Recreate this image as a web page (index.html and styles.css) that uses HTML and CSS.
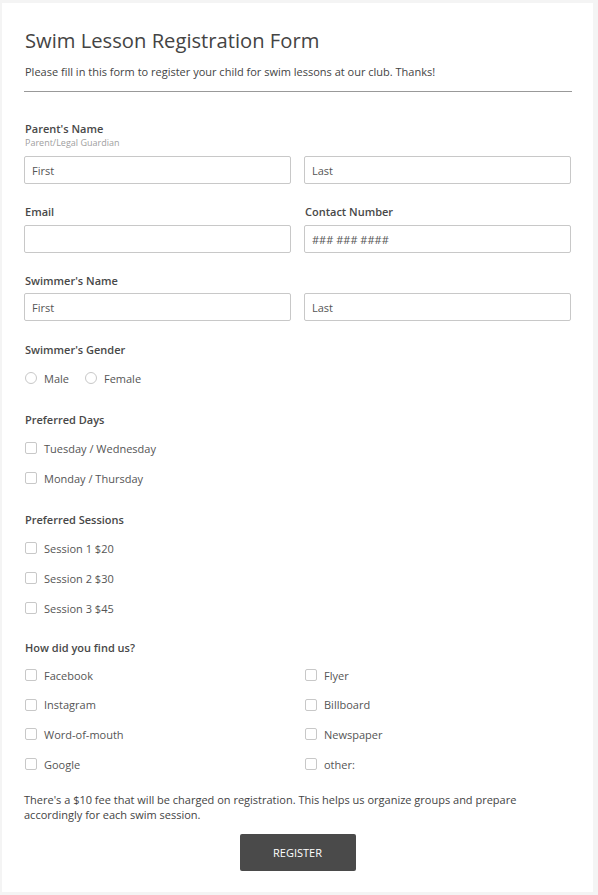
FILE: index.html
```html
<!DOCTYPE html>
<html lang="en">
<head>
<meta charset="utf-8">
<title>Swim Lesson Registration Form</title>
<link rel="stylesheet" href="styles.css">
</head>
<body>
<form class="card">
  <header class="head">
    <h1 class="title">Swim Lesson Registration Form</h1>
    <p class="intro">Please fill in this form to register your child for swim lessons at our club. Thanks!</p>
  </header>

  <div class="field">
    <div class="label">Parent's Name</div>
    <div class="sublabel">Parent/Legal Guardian</div>
    <div class="pair">
      <input class="text" type="text" placeholder="First">
      <input class="text" type="text" placeholder="Last">
    </div>
  </div>

  <div class="pair field">
    <div>
      <div class="label">Email</div>
      <input class="text" type="text">
    </div>
    <div>
      <div class="label">Contact Number</div>
      <input class="text" type="text" placeholder="### ### ####">
    </div>
  </div>

  <div class="field tight">
    <div class="label">Swimmer's Name</div>
    <div class="pair">
      <input class="text" type="text" placeholder="First">
      <input class="text" type="text" placeholder="Last">
    </div>
  </div>

  <div class="field group">
    <div class="label">Swimmer's Gender</div>
    <div class="inline">
      <label class="opt"><input class="radio" type="radio" name="g">Male</label>
      <label class="opt"><input class="radio" type="radio" name="g">Female</label>
    </div>
  </div>

  <div class="field group">
    <div class="label">Preferred Days</div>
    <div class="list">
      <label class="opt"><input class="check" type="checkbox">Tuesday / Wednesday</label>
      <label class="opt"><input class="check" type="checkbox">Monday / Thursday</label>
    </div>
  </div>

  <div class="field group">
    <div class="label">Preferred Sessions</div>
    <div class="list">
      <label class="opt"><input class="check" type="checkbox">Session 1 $20</label>
      <label class="opt"><input class="check" type="checkbox">Session 2 $30</label>
      <label class="opt"><input class="check" type="checkbox">Session 3 $45</label>
    </div>
  </div>

  <div class="field group last">
    <div class="label">How did you find us?</div>
    <div class="list two">
      <label class="opt"><input class="check" type="checkbox">Facebook</label>
      <label class="opt"><input class="check" type="checkbox">Flyer</label>
      <label class="opt"><input class="check" type="checkbox">Instagram</label>
      <label class="opt"><input class="check" type="checkbox">Billboard</label>
      <label class="opt"><input class="check" type="checkbox">Word-of-mouth</label>
      <label class="opt"><input class="check" type="checkbox">Newspaper</label>
      <label class="opt"><input class="check" type="checkbox">Google</label>
      <label class="opt"><input class="check" type="checkbox">other:</label>
    </div>
  </div>

  <p class="note">There's a $10 fee that will be charged on registration. This helps us organize groups and prepare accordingly for each swim session.</p>

  <div class="actions">
    <button class="btn" type="button">REGISTER</button>
  </div>
</form>
</body>
</html>
```

FILE: styles.css
```css
* { box-sizing: border-box; }

html, body {
  margin: 0;
  padding: 0;
  background: #f4f4f4;
}

body {
  padding: 3px 5px 3px 2px;
  font-family: "Open Sans", "Liberation Sans", sans-serif;
  color: #555;
}

.card {
  background: #fff;
  padding: 24px 22px 20px 22px;
  height: 889px;
}

.head {
  border-bottom: 1px solid #999;
  padding-bottom: 11px;
  margin-right: -1px;
}

.title {
  margin: 0 0 0 1px;
  font-size: 20.2px;
  font-weight: 400;
  line-height: 26px;
  color: #444;
}

.intro {
  margin: 11px 0 0 1px;
  font-size: 11px;
  line-height: 16px;
  color: #444;
}

.field { margin-top: 20px; }
.head + .field { margin-top: 29px; }

.label {
  font-size: 11px;
  font-weight: 600;
  line-height: 16px;
  color: #484848;
  margin-bottom: 5px;
  padding-left: 1px;
}

.tight .label { margin-bottom: 4px; }

.sublabel {
  font-size: 9px;
  line-height: 12px;
  color: #a0a0a0;
  margin: -5px 0 7px 1px;
}

.pair {
  display: grid;
  grid-template-columns: 1fr 1fr;
  column-gap: 13px;
}

.text {
  display: block;
  width: 100%;
  height: 28px;
  margin: 0;
  border: 1px solid #c8c8c8;
  border-radius: 2px;
  padding: 0 7px;
  font-family: inherit;
  font-size: 11px;
  color: #555;
  background: #fff;
}

.text::placeholder { color: #555; opacity: 1; }

.group .label { margin-bottom: 12px; }
.group { margin-top: 21px; }
.group + .group { margin-top: 26px; }
.group.last { margin-top: 24px; }
.last .label { margin-bottom: 11px; }

.inline {
  display: flex;
  gap: 15px;
}

.list {
  display: grid;
  row-gap: 14px;
}

.last .list { row-gap: 13.7px; }

.list.two {
  grid-template-columns: 1fr 1fr;
  column-gap: 13px;
}

.opt {
  display: flex;
  align-items: center;
  height: 16px;
  font-size: 11px;
  color: #555;
}

.check, .radio {
  appearance: none;
  -webkit-appearance: none;
  margin: 0 7px 0 1px;
  width: 12px;
  height: 12px;
  border: 1px solid #c8c8c8;
  background: #fff;
  flex: none;
}

.check { border-radius: 2px; }
.radio { border-radius: 50%; }

.note {
  margin: 20px 0 0 0;
  font-size: 11px;
  line-height: 15px;
  color: #444;
}

.actions {
  display: flex;
  justify-content: center;
  margin-top: 12px;
}

.btn {
  width: 116px;
  height: 37px;
  border: none;
  border-radius: 2px;
  background: #4a4a4a;
  color: #fff;
  font-family: inherit;
  font-size: 11px;
}
```
